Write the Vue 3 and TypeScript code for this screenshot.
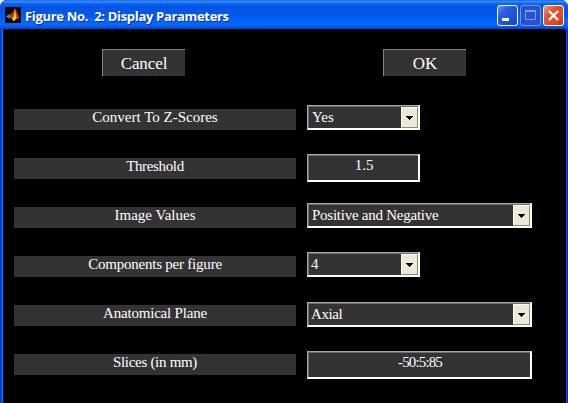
<script setup lang="ts">
interface Field {
  label: string
  value: string
  kind: 'popup' | 'edit'
  wide: boolean
  name: string
}

const fields: Field[] = [
  { label: 'Convert To Z-Scores', value: 'Yes', kind: 'popup', wide: false, name: 'zscores' },
  { label: 'Threshold', value: '1.5', kind: 'edit', wide: false, name: 'threshold' },
  { label: 'Image Values', value: 'Positive and Negative', kind: 'popup', wide: true, name: 'values' },
  { label: 'Components per figure', value: '4', kind: 'popup', wide: false, name: 'components' },
  { label: 'Anatomical Plane', value: 'Axial', kind: 'popup', wide: true, name: 'plane' },
  { label: 'Slices (in mm)', value: '-50:5:85', kind: 'edit', wide: true, name: 'slices' },
]
</script>

<template>
  <div class="window">
    <header class="titlebar">
      <svg class="logo" width="16" height="16" viewBox="0 0 16 16">
        <rect width="16" height="16" fill="#050505" />
        <path d="M0.5 9.2 4.8 7.2 6.8 9.3 3.8 11.6Z" fill="#3e8f98" />
        <path d="M4.8 7.2 7.2 5.4 10 1.5 8.6 8 6.5 10.5Z" fill="#7b3525" />
        <path d="M10 1.2C11.6 2.6 12.2 7.5 15.3 12.1 12.8 10.4 11.2 11.7 8.7 14.8 7.8 12.6 6.7 11.5 4.7 11.2 8 9.4 8.4 4 10 1.2Z" fill="#d92c0b" />
        <path d="M10 2.2C10.8 5.3 10.6 9 11.7 10.9 10.7 11.6 9.8 13 8.7 14.3 8.1 12.7 7.6 12.2 7 11.6 9.2 9.5 9.3 5.5 10 2.2Z" fill="#ffd02a" />
      </svg>
      <h1 class="title">Figure No.&nbsp; 2: Display Parameters</h1>
      <div class="controls">
        <button class="ctl" aria-label="Minimize">
          <svg width="19" height="19" viewBox="0 0 19 19"><rect x="4" y="12" width="7" height="3" fill="#fff" /></svg>
        </button>
        <button class="ctl dim" aria-label="Maximize">
          <svg width="19" height="19" viewBox="0 0 19 19"><path d="M4.5 4.5h10v9h-10zM4.5 5.5h10" fill="none" stroke="#829be4" /></svg>
        </button>
        <button class="ctl close" aria-label="Close">
          <svg width="19" height="19" viewBox="0 0 19 19"><path d="M5 5 14 14M14 5 5 14" stroke="#fff" stroke-width="2.3" /></svg>
        </button>
      </div>
    </header>
    <main class="figure">
      <div class="actions">
        <button class="push">Cancel</button>
        <button class="push">OK</button>
      </div>
      <div class="fields">
        <div v-for="f in fields" :key="f.name" class="row" :class="f.name">
          <div class="label"><span>{{ f.label }}</span></div>
          <div class="field" :class="[f.kind, { wide: f.wide }]">
            <span class="value">{{ f.value }}</span>
            <span v-if="f.kind === 'popup'" class="drop">
              <svg width="7" height="4" viewBox="0 0 7 4" shape-rendering="crispEdges"><path d="M0 0H7V1H6V2H5V3H4V4H3V3H2V2H1V1H0Z" fill="#000" /></svg>
            </span>
          </div>
        </div>
      </div>
    </main>
  </div>
</template>

<style>
body { margin: 0; background: #ece9d8; overflow: hidden; }
</style>

<style scoped>
* { box-sizing: border-box; }
button { padding: 0; margin: 0; }
.window {
  width: 568px;
  height: 403px;
  display: flex;
  flex-direction: column;
  background: linear-gradient(90deg, #0831d9 0 1px, #0c50e8 1px 2px, #1667f4 2px 3px, #000 3px 566px, #0b4be8 566px 567px, #0523bd 567px);
  border-radius: 7px 7px 0 0;
  overflow: hidden;
}
.titlebar {
  height: 29px;
  flex: none;
  display: flex;
  align-items: flex-start;
  padding: 5px 4px 0 5px;
  background: linear-gradient(180deg, #0755db 0, #3c91ff 1px, #2b83fb 2px, #0a60ec 4px, #0055e5 7px, #0057e9 14px, #0265fa 20px, #0268ff 25px, #0059ed 27px, #0140c2 29px);
}
.logo { flex: none; margin-top: 2px; }
.title {
  margin: 2px 0 0 4px;
  font: bold 13px/18px "Open Sans", "Noto Sans", sans-serif;
  letter-spacing: -0.32px;
  color: #fff;
  text-shadow: 1px 1px 0 #0a2f9c;
  white-space: nowrap;
}
.controls { margin-left: auto; display: flex; gap: 2px; }
.ctl {
  width: 21px;
  height: 21px;
  display: flex;
  border: 1px solid #fff;
  border-radius: 3px;
  background: linear-gradient(135deg, #7396ec 0, #2a60df 30%, #1e50d4 70%, #1748be 100%);
}
.ctl.dim { border-color: #7694e6; background: #2453d2; }
.ctl.close { background: linear-gradient(135deg, #ed9a80 0, #e25532 35%, #dc4a20 75%, #b93a12 100%); }
.figure {
  flex: 1;
  padding: 20px 0 0 14px;
  color: #fff;
  font-family: "Liberation Serif", serif;
}
.actions { display: flex; gap: 198px; padding-left: 88px; }
.push {
  width: 83px;
  height: 27px;
  border: 0 solid #858585;
  border-width: 1px 0 0 1px;
  background: #333;
  color: #fff;
  font: 17px/25px "Liberation Serif", serif;
  letter-spacing: -0.1px;
}
.fields { margin-top: 29px; font-size: 15px; }
.row { height: 49px; display: flex; align-items: flex-start; gap: 11px; }
.components { height: 50px; }
.label {
  width: 282px;
  height: 21px;
  margin-top: 4px;
  background: #333;
  text-align: center;
  line-height: 17px;
  white-space: nowrap;
}
.plane .label, .slices .label { margin-top: 3px; }
.threshold .label { letter-spacing: -0.35px; }
.components .label { letter-spacing: -0.22px; }
.plane .label { letter-spacing: -0.2px; }
.slices .label { letter-spacing: -0.3px; }
.field {
  width: 113px;
  display: flex;
  background: #333;
  border: solid;
  border-width: 1px 2px 2px 1px;
  border-color: #aca899 #fffff6 #fffff6 #aca899;
  box-shadow: inset 1px 1px 0 #716f64;
  white-space: nowrap;
}
.field.wide { width: 225px; }
.popup { height: 25px; padding: 1px 0 0 4px; line-height: 20px; }
.components .popup, .plane .popup { padding-left: 3px; }
.edit { height: 28px; padding: 1px 0 0 2px; justify-content: center; line-height: 19px; }
.values .value { letter-spacing: -0.25px; }
.plane .value { letter-spacing: -0.4px; }
.slices .value { letter-spacing: -0.85px; }
.drop {
  margin-left: auto;
  width: 17px;
  height: 21px;
  display: flex;
  align-items: center;
  justify-content: center;
  background: #ece9d8;
  border: 1px solid;
  border-color: #fffff4 #8b8878 #8b8878 #fffff4;
}
</style>
